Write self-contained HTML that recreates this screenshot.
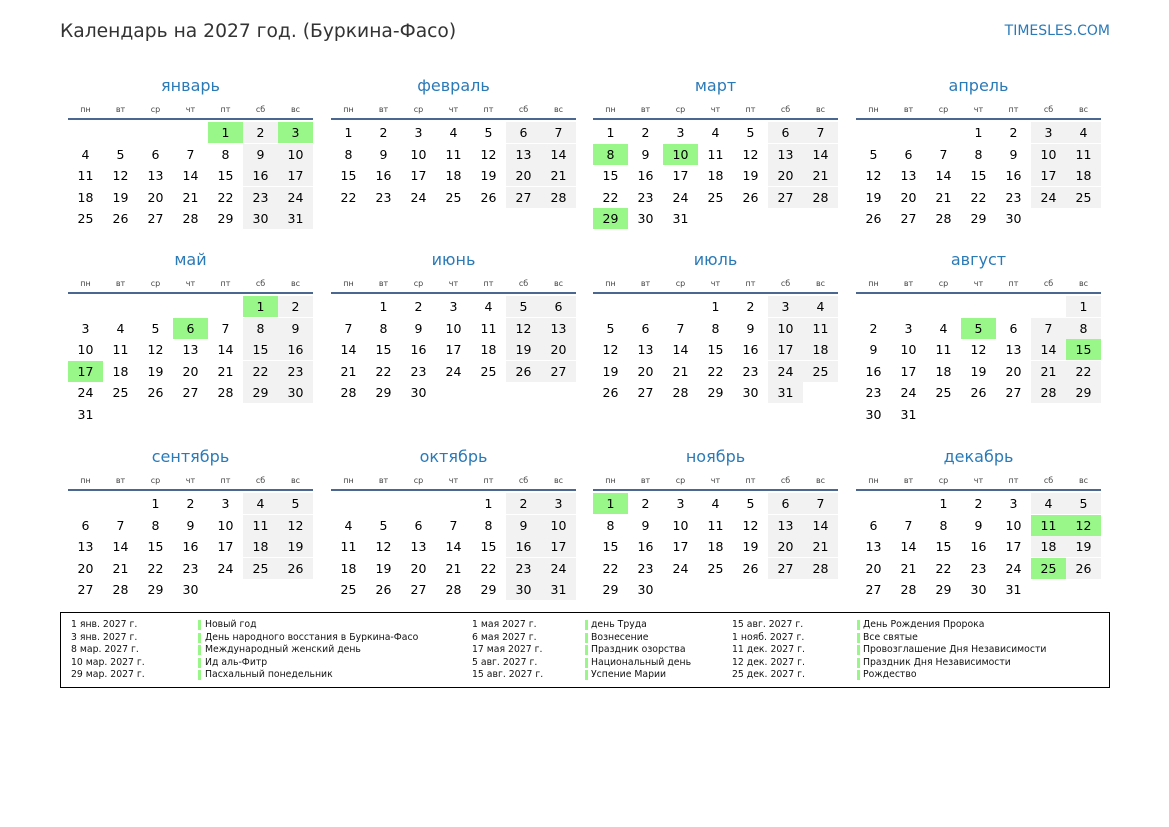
<!DOCTYPE html><html><head><meta charset="utf-8"><style>
body{margin:0;width:1169px;height:827px;background:#fff;position:relative;font-family:"DejaVu Sans","Liberation Sans",sans-serif;overflow:hidden}
.a{position:absolute;white-space:nowrap}
.t{left:60px;top:21px;font-size:18.7px;color:#333}
.s{right:59px;top:23px;font-size:14px;color:#2a7ab8}
.mn{font-size:16px;color:#2a7ab8;text-align:center;width:245px}
.dw{font-size:8px;color:#444;width:35px;text-align:center}
.ln{height:2px;background:#4a6790;width:245px}
.c{width:35px;height:21px;line-height:21px;text-align:center;font-size:12.5px;color:#000}
.we{background:#f2f2f2}.h{background:#99f78a}
.lg{left:60px;top:612px;width:1048px;height:74px;border:1px solid #000}
.li{font-size:9.3px;color:#111;line-height:12.5px}
.bar{width:3px;height:10px;background:#99f78a}
</style></head><body>
<div class="a t">Календарь на 2027 год. (Буркина-Фасо)</div>
<div class="a s">TIMESLES.COM</div>
<div id="cal"></div>
<div class="a lg"></div>
<div class="a li" style="left:71px;top:619px">1 янв. 2027 г.<br>3 янв. 2027 г.<br>8 мар. 2027 г.<br>10 мар. 2027 г.<br>29 мар. 2027 г.</div>
<div class="a li" style="left:205px;top:619px">Новый год<br>День народного восстания в Буркина-Фасо<br>Международный женский день<br>Ид аль-Фитр<br>Пасхальный понедельник</div>
<div class="a li" style="left:472px;top:619px">1 мая 2027 г.<br>6 мая 2027 г.<br>17 мая 2027 г.<br>5 авг. 2027 г.<br>15 авг. 2027 г.</div>
<div class="a li" style="left:591px;top:619px">день Труда<br>Вознесение<br>Праздник озорства<br>Национальный день<br>Успение Марии</div>
<div class="a li" style="left:732px;top:619px">15 авг. 2027 г.<br>1 нояб. 2027 г.<br>11 дек. 2027 г.<br>12 дек. 2027 г.<br>25 дек. 2027 г.</div>
<div class="a li" style="left:863px;top:619px">День Рождения Пророка<br>Все святые<br>Провозглашение Дня Независимости<br>Праздник Дня Независимости<br>Рождество</div>
<script>
var names=["январь","февраль","март","апрель","май","июнь","июль","август","сентябрь","октябрь","ноябрь","декабрь"];
var start=[4,0,0,3,5,1,3,6,2,4,0,2];var len=[31,28,31,30,31,30,31,31,30,31,30,31];
var hol={0:[1,3],2:[8,10,29],4:[1,6,17],7:[5,15],10:[1],11:[11,12,25]};
var dws=["пн","вт","ср","чт","пт","сб","вс"];
var xs=[68,331,593,856],ys=[74,248,445];var h="";
for(var m=0;m<12;m++){var x=xs[m%4],y=ys[Math.floor(m/4)];
h+='<div class="a mn" style="left:'+x+'px;top:'+(y+2)+'px">'+names[m]+'</div>';
for(var i=0;i<7;i++)h+='<div class="a dw" style="left:'+(x+i*35)+'px;top:'+(y+31)+'px">'+dws[i]+'</div>';
h+='<div class="a ln" style="left:'+x+'px;top:'+(y+44)+'px"></div>';
for(var d=1;d<=len[m];d++){var p=start[m]+d-1,col=p%7,row=Math.floor(p/7);
var cls="c";if(hol[m]&&hol[m].indexOf(d)>=0)cls+=" h";else if(col>=5)cls+=" we";
h+='<div class="a '+cls+'" style="left:'+(x+col*35)+'px;top:'+(y+48+row*21.5)+'px">'+d+'</div>';}}
document.getElementById("cal").innerHTML=h;
var bh="";for(var k=0;k<5;k++){[198,585,857].forEach(function(bx){bh+='<div class="a bar" style="left:'+bx+'px;top:'+(620+k*12.5)+'px"></div>';});}
document.body.insertAdjacentHTML("beforeend",bh);
</script>
</body></html>
